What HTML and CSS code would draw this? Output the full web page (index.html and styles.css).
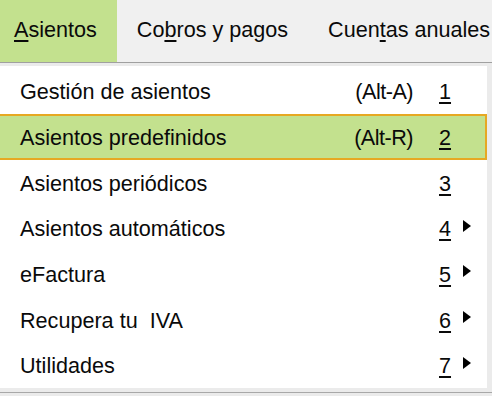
FILE: index.html
```html
<!DOCTYPE html>
<html lang="es">
<head>
    <meta charset="UTF-8">
    <title>Asientos</title>
    <link rel="stylesheet" href="styles.css">
</head>
<body>
    <div class="menubar">
        <div class="bar-item active"><u>A</u>sientos</div>
        <div class="bar-item">Co<u>b</u>ros y pagos</div>
        <div class="bar-item">Cuen<u>t</u>as anuales</div>
    </div>

    <div class="dropdown">
        <div class="row">
            <span class="label">Gestión de asientos</span>
            <span class="shortcut">(Alt-A)</span>
            <span class="key">1</span>
            <span class="arrow"></span>
        </div>
        <div class="row hot">
            <span class="label">Asientos predefinidos</span>
            <span class="shortcut">(Alt-R)</span>
            <span class="key">2</span>
            <span class="arrow"></span>
        </div>
        <div class="row">
            <span class="label">Asientos periódicos</span>
            <span class="shortcut"></span>
            <span class="key">3</span>
            <span class="arrow"></span>
        </div>
        <div class="row">
            <span class="label">Asientos automáticos</span>
            <span class="shortcut"></span>
            <span class="key">4</span>
            <span class="arrow sub"></span>
        </div>
        <div class="row">
            <span class="label">eFactura</span>
            <span class="shortcut"></span>
            <span class="key">5</span>
            <span class="arrow sub"></span>
        </div>
        <div class="row">
            <span class="label">Recupera tu&nbsp; IVA</span>
            <span class="shortcut"></span>
            <span class="key">6</span>
            <span class="arrow sub"></span>
        </div>
        <div class="row">
            <span class="label">Utilidades</span>
            <span class="shortcut"></span>
            <span class="key">7</span>
            <span class="arrow sub"></span>
        </div>
    </div>

    <div class="bottom-line"></div>
</body>
</html>
```

FILE: styles.css
```css
body {
    margin: 0;
    background-color: #ebebeb;
    font-family: "Liberation Sans", Arial, sans-serif;
    font-size: 21.6px;
    color: #0a0a0a;
    overflow: hidden;
}

u {
    text-decoration-thickness: 2px;
    text-underline-offset: 3px;
}

.menubar {
    display: flex;
    height: 62px;
    background-color: #f0f0f0;
    border-bottom: 1px solid #a0a0a0;
    white-space: nowrap;
    overflow: hidden;
}

.bar-item {
    padding: 0 20px;
    line-height: 60px;
}

.bar-item.active {
    padding-left: 14px;
    padding-right: 20px;
    background-color: #c3e18e;
}

.dropdown {
    width: 487px;
    margin-top: 3px;
    padding-top: 2.3px;
    background-color: #fff;
}

.row {
    display: flex;
    align-items: center;
    box-sizing: border-box;
    height: 45.7px;
    padding: 1px 14px 0 20px;
    border: 2px solid transparent;
    border-left: 0;
    line-height: 43px;
    white-space: nowrap;
}

.row.hot {
    background-color: #c3e18e;
    border-color: #e6a823;
}

.label {
    flex: 1;
}

.shortcut {
    text-align: right;
    letter-spacing: -0.5px;
}

.key {
    width: 14px;
    margin-left: 26px;
    text-decoration: underline;
    text-decoration-thickness: 2px;
    text-underline-offset: 3px;
}

.arrow {
    width: 8px;
    height: 12px;
    margin-left: 10px;
    margin-top: -6px;
}

.arrow.sub {
    width: 0;
    height: 0;
    border-left: 8px solid #000;
    border-top: 6px solid transparent;
    border-bottom: 6px solid transparent;
}

.bottom-line {
    margin-top: 4px;
    border-top: 1px solid #a8a8a8;
}
```
